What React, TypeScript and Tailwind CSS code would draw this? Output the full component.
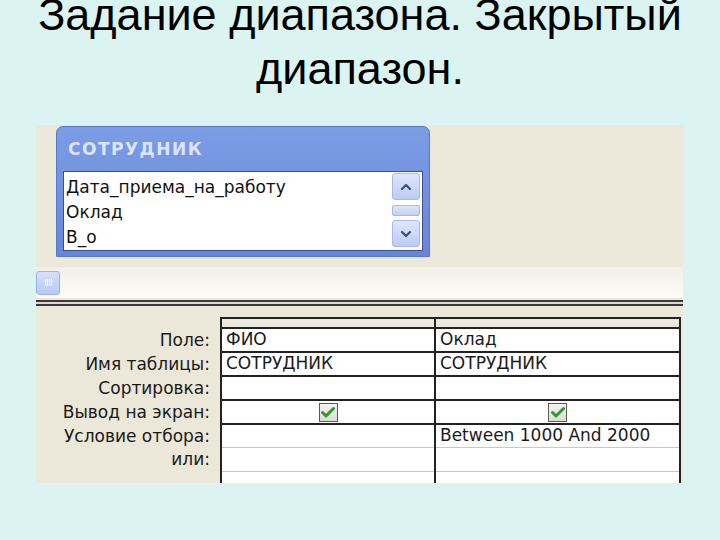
import React from "react";

const sans = { fontFamily: '"DejaVu Sans", Verdana, sans-serif' };

function Check() {
  return (
    <div className="w-[19px] h-[19px] border border-[#5a5a5a] bg-gradient-to-b from-[#f4f4f0] to-[#dcdcd4] flex items-center justify-center">
      <svg width="14" height="12" viewBox="0 0 14 12">
        <path d="M1.5 6.5 L5 10 L12.5 2.5" fill="none" stroke="#2f9a2f" strokeWidth="3" strokeLinecap="round" strokeLinejoin="round" />
      </svg>
    </div>
  );
}

function ScrollBtn({ dir }: { dir: "up" | "down" }) {
  return (
    <div className="w-[28px] h-[27px] rounded-[3px] border border-[#a9b9ea] bg-gradient-to-b from-[#dfe7fd] to-[#bccbf3] flex items-center justify-center">
      <svg width="12" height="8" viewBox="0 0 12 8">
        {dir === "up" ? (
          <path d="M2 6 L6 2 L10 6" fill="none" stroke="#3c4d86" strokeWidth="2.2" strokeLinecap="round" strokeLinejoin="round" />
        ) : (
          <path d="M2 2 L6 6 L10 2" fill="none" stroke="#3c4d86" strokeWidth="2.2" strokeLinecap="round" strokeLinejoin="round" />
        )}
      </svg>
    </div>
  );
}

const labels = ["Поле:", "Имя таблицы:", "Сортировка:", "Вывод на экран:", "Условие отбора:", "или:"];
const rowH = ["h-[24px]", "h-[24px]", "h-[24px]", "h-[24px]", "h-[23px]", "h-[24px]"];

export default function App() {
  const col1: React.ReactNode[] = ["ФИО", "СОТРУДНИК", "", "check", "", ""];
  const col2: React.ReactNode[] = ["Оклад", "СОТРУДНИК", "", "check", "Between 1000 And 2000", ""];
  const dark = [true, true, true, true, false, false];

  const renderCell = (v: React.ReactNode, i: number, w: string) => (
    <div
      key={i}
      className={`${rowH[i]} ${w} shrink-0 flex items-center bg-white px-[4px] text-[17px] text-[#1a1a1a] whitespace-nowrap ${dark[i] ? "border-b-2 border-b-[#222]" : "border-b border-b-[#c8c8c8]"} ${v === "check" ? "justify-center" : ""}`}
    >
      {v === "check" ? <Check /> : v}
    </div>
  );

  return (
    <div className="w-[720px] h-[540px] bg-[#dbf4f1] overflow-hidden flex flex-col">
      <div
        className="mt-[-12px] shrink-0 text-center text-[45px] leading-[54px] text-black"
        style={{ fontFamily: '"Liberation Sans", Arial, sans-serif' }}
      >
        <div>Задание диапазона. Закрытый</div>
        <div>диапазон.</div>
      </div>

      <div className="ml-[36px] mt-[29px] w-[647px] h-[358px] shrink-0 flex flex-col bg-[#ebe8d9] overflow-hidden" style={sans}>
        {/* upper area */}
        <div className="h-[142px] shrink-0 pt-[1px] pl-[20px]">
          <div className="w-[374px] h-[131px] rounded-t-[7px] bg-gradient-to-b from-[#7d9ce6] to-[#6687d8] border border-[#5878cf] flex flex-col px-[6px] pb-[5px]">
            <div className="h-[44px] shrink-0 flex items-center pl-[5px] pt-[2px] text-[17px] font-bold tracking-[1.5px] text-[#dbe5f9]">
              СОТРУДНИК
            </div>
            <div className="flex-1 bg-white border border-[#3d4f8a] flex">
              <div className="flex-1 pt-[3px] pl-[2px] text-[17px] text-[#111] whitespace-nowrap">
                <div className="h-[25px] flex items-center">Дата_приема_на_работу</div>
                <div className="h-[25px] flex items-center">Оклад</div>
                <div className="h-[25px] flex items-center">В_о</div>
              </div>
              <div className="w-[32px] flex flex-col items-center pt-[1px] pb-[3px] justify-between">
                <ScrollBtn dir="up" />
                <div className="w-[28px] h-[11px] rounded-[2px] border border-[#a9b9ea] bg-gradient-to-b from-[#dfe7fd] to-[#c4d1f4]" />
                <ScrollBtn dir="down" />
              </div>
            </div>
          </div>
        </div>

        {/* strip */}
        <div className="h-[31px] shrink-0 bg-gradient-to-b from-[#f1efe6] to-[#fdfcf8] flex items-center">
          <div className="w-[24px] h-[24px] rounded-[3px] border border-[#9fb0e6] bg-gradient-to-b from-[#d7e0fb] to-[#b8c8f2] flex items-center justify-center gap-[1px]">
            <div className="w-[1px] h-[7px] bg-white" />
            <div className="w-[1px] h-[7px] bg-white" />
            <div className="w-[1px] h-[7px] bg-white" />
            <div className="w-[1px] h-[7px] bg-white" />
          </div>
        </div>

        {/* double line */}
        <div className="h-[2px] shrink-0 bg-[#3a3a3a] mt-[2px]" />
        <div className="h-[2px] shrink-0 bg-[#dcdad0]" />
        <div className="h-[2px] shrink-0 bg-[#3a3a3a]" />

        {/* lower grid */}
        <div className="flex-1 flex items-start pt-[11px] overflow-hidden">
          <div className="w-[184px] shrink-0 flex flex-col">
            <div className="h-[12px] shrink-0" />
            {labels.map((l, i) => (
              <div key={i} className={`${rowH[i]} shrink-0 flex items-center justify-end pr-[10px] text-[17px] text-[#1a1a1a] whitespace-nowrap`}>
                {l}
              </div>
            ))}
          </div>
          <div className="flex flex-col shrink-0 border-l-2 border-[#222]">
            <div className="flex shrink-0 h-[12px] border-t-2 border-b-2 border-[#222] bg-[#ebe9de]">
              <div className="w-[214px] border-r-2 border-[#222]" />
              <div className="w-[245px] border-r-2 border-[#222]" />
            </div>
            <div className="flex shrink-0">
              <div className="flex flex-col border-r-2 border-[#222]">
                {col1.map((v, i) => renderCell(v, i, "w-[212px]"))}
                <div className="h-[20px] shrink-0 bg-white" />
              </div>
              <div className="flex flex-col border-r-2 border-[#222]">
                {col2.map((v, i) => renderCell(v, i, "w-[243px]"))}
                <div className="h-[20px] shrink-0 bg-white" />
              </div>
            </div>
          </div>
        </div>
      </div>
    </div>
  );
}
